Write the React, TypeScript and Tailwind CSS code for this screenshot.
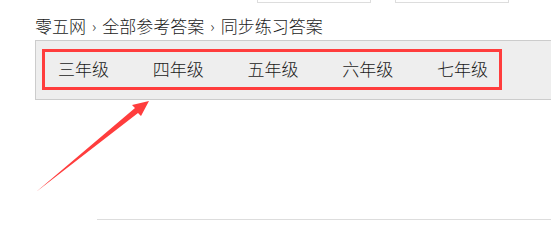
const grades = ["三年级", "四年级", "五年级", "六年级", "七年级"];

export default function App() {
  return (
    <div
      className="relative w-[551px] h-[242px] overflow-hidden bg-white text-[#222]"
      style={{ fontFamily: '"Microsoft YaHei", "Noto Sans CJK SC", sans-serif' }}
    >
      {/* search inputs cut off at the top */}
      <div className="flex h-[3px] pl-[257px] gap-[24px]">
        <div className="w-[114px] h-[3px] border-x border-b border-[#ddd]" />
        <div className="w-[114px] h-[3px] border-x border-b border-[#ddd]" />
      </div>

      {/* breadcrumb */}
      <div className="mt-[11px] ml-[35px] h-[24px] flex items-center text-[17px] leading-[24px] font-light text-[#1a1a1a]">
        <span>零五网</span>
        <span className="mx-[6px] text-[15px]">›</span>
        <span>全部参考答案</span>
        <span className="mx-[6px] text-[15px]">›</span>
        <span>同步练习答案</span>
      </div>

      {/* grade nav */}
      <div className="mt-[2px] ml-[35px] w-[600px] h-[60px] border border-[#ccc] bg-[#eee] pl-[6px] pt-[8px]">
        <div className="w-[460px] h-[41px] border-[3px] border-[#ff3d3d] flex items-center justify-between pl-[13px] pr-[11px] pb-[3px]">
          {grades.map((g) => (
            <span key={g} className="text-[17px] leading-none font-light text-[#1a1a1a]">
              {g}
            </span>
          ))}
        </div>
      </div>

      {/* bottom divider */}
      <div className="mt-[119px] ml-[97px] border-t border-[#ddd]" />

      {/* annotation arrow */}
      <svg
        className="absolute left-0 top-0 pointer-events-none"
        width="551"
        height="242"
        viewBox="0 0 551 242"
      >
        <path
          d="M36 192 L135 108 L132 105 L149 101 L141 116 L138 113 Z"
          fill="#ff3d3d"
        />
      </svg>
    </div>
  );
}
